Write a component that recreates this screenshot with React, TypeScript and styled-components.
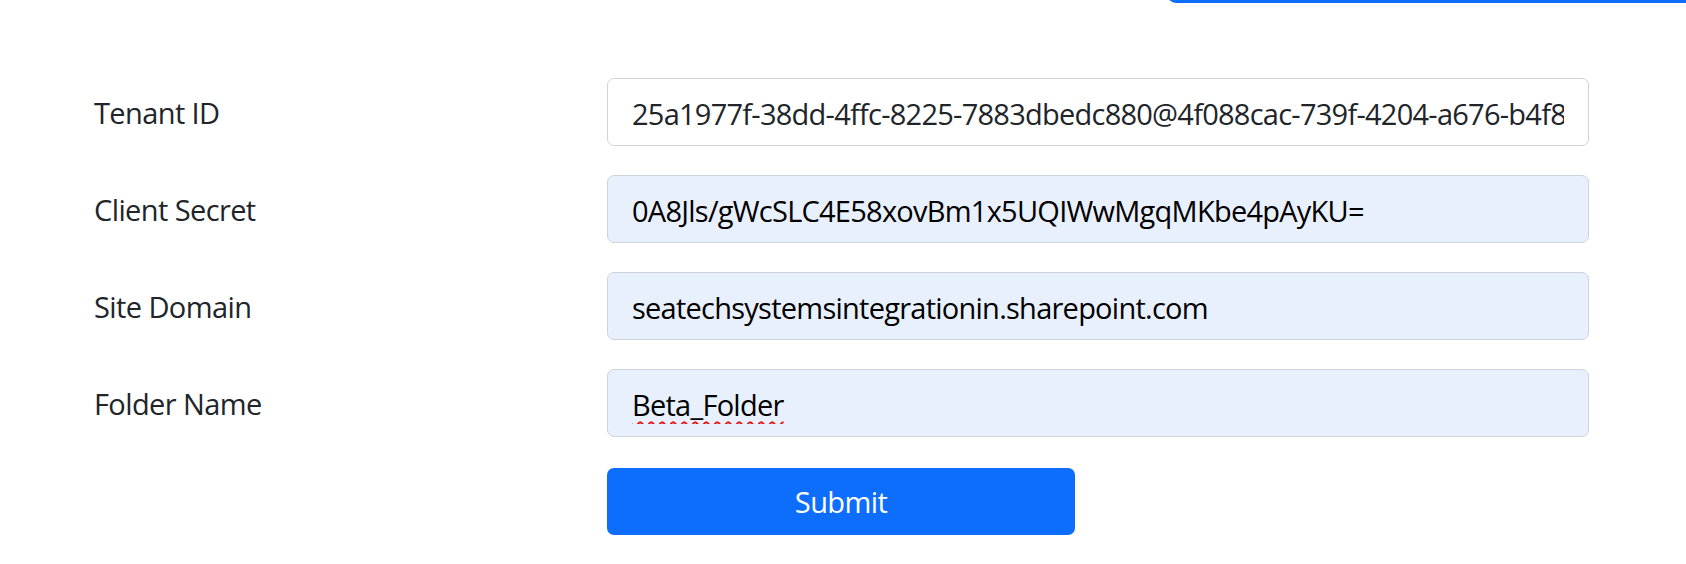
import styled, { createGlobalStyle } from "styled-components";

const GlobalStyle = createGlobalStyle`
  html, body {
    margin: 0;
    padding: 0;
    background-color: #fff;
  }
  body {
    font-family: "Open Sans", "Noto Sans", Arial, sans-serif;
    color: #212529;
  }
`;

const Page = styled.div`
  width: 1686px;
  min-height: 564px;
  background-color: #fff;
`;

const TopStrip = styled.div`
  display: flex;
  justify-content: flex-end;
  height: 3px;
  overflow: hidden;
`;

const TopButtonEdge = styled.div`
  width: 519px;
  height: 14px;
  margin-top: -11px;
  background-color: #0d6efd;
  border-bottom-left-radius: 9px;
`;

const Form = styled.form`
  display: flex;
  flex-direction: column;
  gap: 29px;
  padding: 75px 0 0 94px;
`;

const Row = styled.div<{ $offset?: number }>`
  display: grid;
  grid-template-columns: 513px 982px;
  align-items: center;
  margin-top: ${(p) => p.$offset ?? 0}px;
`;

const Label = styled.label`
  font-size: 29px;
  letter-spacing: -0.6px;
  color: #212529;
  line-height: 1;
`;

const Input = styled.input<{ $autofill?: boolean; $misspelled?: boolean }>`
  box-sizing: border-box;
  width: 100%;
  height: 68px;
  padding: 2px 24px 0;
  font-family: "Open Sans", "Noto Sans", Arial, sans-serif;
  font-size: 29px;
  letter-spacing: -0.75px;
  color: ${(p) => (p.$autofill ? "#000" : "#212529")};
  background-color: ${(p) => (p.$autofill ? "#e8f0fe" : "#fff")};
  border: 1.5px solid #ced4da;
  border-radius: 7px;
  outline: none;
  text-decoration-line: ${(p) => (p.$misspelled ? "underline" : "none")};
  text-decoration-style: wavy;
  text-decoration-color: #e81010;
  text-decoration-thickness: 1.6px;
  text-underline-offset: 5px;
`;

const SubmitButton = styled.button`
  box-sizing: border-box;
  width: 468px;
  height: 67px;
  border: none;
  border-radius: 7px;
  background-color: #0d6efd;
  color: #fff;
  font-family: "Open Sans", "Noto Sans", Arial, sans-serif;
  font-size: 29px;
  letter-spacing: -0.6px;
  cursor: pointer;
`;

const fields = [
  {
    label: "Tenant ID",
    value: "25a1977f-38dd-4ffc-8225-7883dbedc880@4f088cac-739f-4204-a676-b4f8a1c3de6e",
    autofill: false,
  },
  {
    label: "Client Secret",
    value: "0A8Jls/gWcSLC4E58xovBm1x5UQIWwMgqMKbe4pAyKU=",
    autofill: true,
  },
  {
    label: "Site Domain",
    value: "seatechsystemsintegrationin.sharepoint.com",
    autofill: true,
  },
  {
    label: "Folder Name",
    value: "Beta_Folder",
    autofill: true,
    misspelled: true,
  },
];

export default function App() {
  return (
    <Page>
      <GlobalStyle />
      <TopStrip>
        <TopButtonEdge />
      </TopStrip>
      <Form onSubmit={(e) => e.preventDefault()}>
        {fields.map((f) => (
          <Row key={f.label}>
            <Label>{f.label}</Label>
            <Input
              defaultValue={f.value}
              $autofill={f.autofill}
              $misspelled={f.misspelled}
              spellCheck={false}
            />
          </Row>
        ))}
        <Row $offset={2}>
          <span />
          <SubmitButton type="submit">Submit</SubmitButton>
        </Row>
      </Form>
    </Page>
  );
}
